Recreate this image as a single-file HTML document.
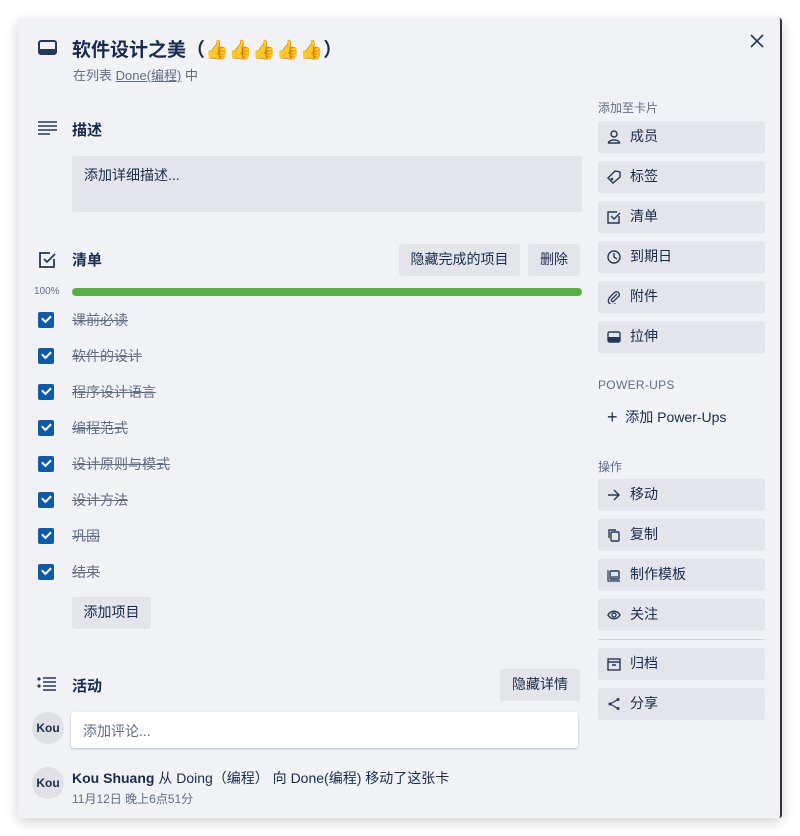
<!DOCTYPE html>
<html><head><meta charset="utf-8"><style>
*{margin:0;padding:0;box-sizing:border-box}
body{width:800px;height:836px;background:#fff;font-family:"Liberation Sans","Noto Sans CJK SC",sans-serif;color:#172b4d;position:relative;overflow:hidden}
.card{position:absolute;left:18px;top:18px;width:764px;height:800px;background:#f1f2f6;border-radius:3px;box-shadow:0 4px 14px rgba(0,0,0,.18);border-right:2px solid #333}
.a{position:absolute}
.btn{position:absolute;background:#e4e5ea;border-radius:3px;font-size:14px;color:#172b4d;line-height:31px;height:32px}
.sb{left:598px;width:167px;padding-left:32px}
.sb svg{position:absolute;left:9px;top:9px}
.h{font-size:15px;font-weight:bold}
.lbl{font-size:12px;color:#5e6c84}
.cb{position:absolute;left:38px;width:16px;height:16px;background:#0f5aa8;border-radius:2px}
.cb:after{content:"";position:absolute;left:4px;top:3px;width:7px;height:4px;border-left:2px solid #fff;border-bottom:2px solid #fff;transform:rotate(-45deg)}
.it{position:absolute;left:72px;font-size:14px;color:#5e6c84;text-decoration:line-through}
.av{position:absolute;left:32px;width:32px;height:32px;border-radius:50%;background:#dfe1e6;font-size:12px;font-weight:bold;text-align:center;line-height:32px;color:#172b4d}
</style></head><body>
<div class="card"></div>
<svg class="a" style="left:38px;top:40px" width="19" height="16" viewBox="0 0 19 16"><rect x="1" y="1" width="17" height="13" rx="2" fill="none" stroke="#253858" stroke-width="2"/><rect x="1" y="9" width="17" height="5" fill="#253858"/></svg>
<div class="a" style="left:72px;top:35px;font-size:19px;font-weight:bold">软件设计之美（👍👍👍👍👍）</div>
<div class="a" style="left:73px;top:65px;font-size:13px;color:#5e6c84">在列表 <span style="text-decoration:underline">Done(编程)</span> 中</div>
<svg class="a" style="left:750px;top:34px" width="14" height="14"><path d="M1 1L13 13M13 1L1 13" stroke="#253858" stroke-width="1.6"/></svg>

<svg class="a" style="left:38px;top:121px" width="20" height="14"><path d="M0 1h19M0 5h19M0 9h19M0 13h12" stroke="#253858" stroke-width="1.6"/></svg>
<div class="a h" style="left:72px;top:119px">描述</div>
<div class="a" style="left:72px;top:156px;width:510px;height:56px;background:#e4e5ea;border-radius:3px;font-size:14px;padding:9px 12px">添加详细描述...</div>

<svg class="a" style="left:39px;top:251px" width="18" height="18"><path d="M15 8v8H1V2h10" fill="none" stroke="#253858" stroke-width="1.8"/><path d="M5 8l3 3 8-8" fill="none" stroke="#253858" stroke-width="1.8"/></svg>
<div class="a h" style="left:72px;top:249px">清单</div>
<div class="btn" style="left:399px;top:244px;width:121px;text-align:center">隐藏完成的项目</div>
<div class="btn" style="left:528px;top:244px;width:52px;text-align:center">删除</div>
<div class="a" style="left:34px;top:286px;font-size:10px;color:#5e6c84">100%</div>
<div class="a" style="left:72px;top:288px;width:510px;height:8px;background:#5aac44;border-radius:4px"></div>

<div class="cb" style="top:312px"></div><div class="it" style="top:310px">课前必读</div>
<div class="cb" style="top:348px"></div><div class="it" style="top:346px">软件的设计</div>
<div class="cb" style="top:384px"></div><div class="it" style="top:382px">程序设计语言</div>
<div class="cb" style="top:420px"></div><div class="it" style="top:418px">编程范式</div>
<div class="cb" style="top:456px"></div><div class="it" style="top:454px">设计原则与模式</div>
<div class="cb" style="top:492px"></div><div class="it" style="top:490px">设计方法</div>
<div class="cb" style="top:528px"></div><div class="it" style="top:526px">巩固</div>
<div class="cb" style="top:564px"></div><div class="it" style="top:562px">结束</div>
<div class="btn" style="left:72px;top:597px;width:79px;text-align:center">添加项目</div>

<svg class="a" style="left:37px;top:677px" width="20" height="14"><circle cx="2" cy="2" r="1.6" fill="#253858"/><circle cx="2" cy="9" r="1.6" fill="#253858"/><path d="M6 1h13M6 5h13M6 9h13M6 13h13" stroke="#253858" stroke-width="1.6"/></svg>
<div class="a h" style="left:72px;top:675px">活动</div>
<div class="btn" style="left:500px;top:669px;width:80px;text-align:center">隐藏详情</div>
<div class="av" style="top:712px">Kou</div>
<div class="a" style="left:71px;top:712px;width:507px;height:36px;background:#fff;border-radius:3px;box-shadow:0 1px 2px rgba(9,30,66,.25);font-size:14px;color:#5e6c84;padding:9px 12px">添加评论...</div>
<div class="av" style="top:767px">Kou</div>
<div class="a" style="left:72px;top:768px;font-size:14px"><b>Kou Shuang</b> 从 Doing（编程） 向 Done(编程) 移动了这张卡</div>
<div class="a" style="left:72px;top:790px;font-size:12px;color:#5e6c84">11月12日 晚上6点51分</div>

<div class="a lbl" style="left:598px;top:99px">添加至卡片</div>
<div class="btn sb" style="top:121px"><svg width="14" height="14"><circle cx="7" cy="4" r="3" fill="none" stroke="#253858" stroke-width="1.4"/><path d="M1.5 13c0-4 11-4 11 0z" fill="none" stroke="#253858" stroke-width="1.4"/></svg>成员</div>
<div class="btn sb" style="top:161px"><svg width="14" height="14"><path d="M1 8L8 1l5 1 0 5-7 6z" fill="none" stroke="#253858" stroke-width="1.4"/><circle cx="5" cy="9" r="1.3" fill="#253858"/></svg>标签</div>
<div class="btn sb" style="top:201px"><svg width="14" height="14"><path d="M12 6v7H1V2h9" fill="none" stroke="#253858" stroke-width="1.4"/><path d="M4 6l3 3 6-6" fill="none" stroke="#253858" stroke-width="1.4"/></svg>清单</div>
<div class="btn sb" style="top:241px"><svg width="14" height="14"><circle cx="7" cy="7" r="6" fill="none" stroke="#253858" stroke-width="1.4"/><path d="M7 3v4l3 2" fill="none" stroke="#253858" stroke-width="1.4"/></svg>到期日</div>
<div class="btn sb" style="top:281px"><svg width="14" height="14"><path d="M10 4L4.5 9.5a1.5 1.5 0 0 0 2 2L12 6a3 3 0 0 0-4-4L2.5 7.5a4 4 0 0 0 6 6" fill="none" stroke="#253858" stroke-width="1.3"/></svg>附件</div>
<div class="btn sb" style="top:321px"><svg width="14" height="14"><rect x="1" y="2" width="12" height="10" rx="1.5" fill="none" stroke="#253858" stroke-width="1.4"/><rect x="1" y="7" width="12" height="5" fill="#253858"/></svg>拉伸</div>

<div class="a lbl" style="left:598px;top:378px;letter-spacing:.3px">POWER-UPS</div>
<div class="a" style="left:607px;top:406px;font-size:14px"><span style="font-size:18px;font-weight:300;position:relative;top:1px">+</span>&nbsp;&nbsp;添加 Power-Ups</div>

<div class="a lbl" style="left:598px;top:458px">操作</div>
<div class="btn sb" style="top:479px"><svg width="14" height="14"><path d="M1 7h11M7 2l5 5-5 5" fill="none" stroke="#253858" stroke-width="1.4"/></svg>移动</div>
<div class="btn sb" style="top:519px"><svg width="14" height="14"><rect x="4" y="4" width="8" height="9" rx="1" fill="none" stroke="#253858" stroke-width="1.4"/><path d="M2 10V2h7" fill="none" stroke="#253858" stroke-width="1.4"/></svg>复制</div>
<div class="btn sb" style="top:559px"><svg width="14" height="14"><rect x="3" y="3" width="9" height="8" rx="1" fill="none" stroke="#253858" stroke-width="1.4"/><path d="M1 2v11h12M4 9h7" fill="none" stroke="#253858" stroke-width="1.2"/></svg>制作模板</div>
<div class="btn sb" style="top:599px"><svg width="14" height="14"><path d="M1 7c3-5 9-5 12 0c-3 5-9 5-12 0z" fill="none" stroke="#253858" stroke-width="1.4"/><circle cx="7" cy="7" r="2" fill="none" stroke="#253858" stroke-width="1.4"/></svg>关注</div>
<div class="a" style="left:598px;top:639px;width:167px;height:1px;background:#d5d8de"></div>
<div class="btn sb" style="top:648px"><svg width="14" height="14"><rect x="1" y="2" width="12" height="11" fill="none" stroke="#253858" stroke-width="1.4"/><path d="M1 5h12M5 8h4" stroke="#253858" stroke-width="1.4"/></svg>归档</div>
<div class="btn sb" style="top:688px"><svg width="14" height="14"><circle cx="11" cy="2.5" r="1.5" fill="#253858"/><circle cx="3" cy="7" r="1.5" fill="#253858"/><circle cx="11" cy="11.5" r="1.5" fill="#253858"/><path d="M11 2.5L3 7l8 4.5" fill="none" stroke="#253858" stroke-width="1.2"/></svg>分享</div>
</body></html>
